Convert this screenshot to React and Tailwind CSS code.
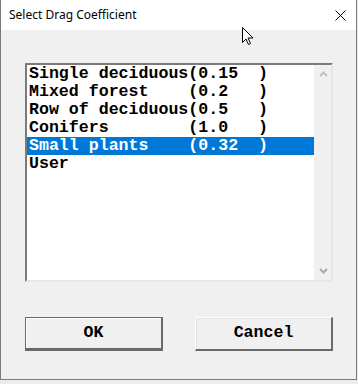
import React from "react";

const rows = [
  "Single deciduous(0.15  )",
  "Mixed forest    (0.2   )",
  "Row of deciduous(0.5   )",
  "Conifers        (1.0   )",
  "Small plants    (0.32  )",
  "User",
];

export default function App() {
  const mono = { fontFamily: '"Liberation Mono", "Courier New", monospace' };
  return (
    <div className="relative w-[358px] h-[384px] bg-[#ececec] overflow-hidden">
      <div className="w-[357px] h-[380px] flex flex-col border-l border-r border-b border-[#7a7a7a] bg-[#f0f0f0]">
        <div className="h-[30px] bg-white flex items-center justify-between pl-[8px] pr-[10px] shrink-0">
          <span
            className="text-[12px] text-black"
            style={{ fontFamily: '"Noto Sans", "Open Sans", sans-serif' }}
          >
            Select Drag Coefficient
          </span>
          <svg width="11" height="11" viewBox="0 0 11 11" className="mt-[1px]">
            <path d="M0.5 0.5 L10.5 10.5 M10.5 0.5 L0.5 10.5" stroke="#000" strokeWidth="1" />
          </svg>
        </div>
        <div className="flex flex-col pl-[24px] pt-[33px]">
          <div className="w-[308px] h-[219px] border-t-2 border-l-2 border-t-[#7a7a7a] border-l-[#7a7a7a] border-b-2 border-r-2 border-b-[#e6e6e6] border-r-[#e6e6e6] bg-white flex">
            <div className="flex-1 flex flex-col" style={mono}>
              {rows.map((r, i) => (
                <div
                  key={i}
                  className={
                    "h-[18px] leading-[18px] text-[16.6px] font-bold pl-[2px] whitespace-pre " +
                    (i === 4 ? "bg-[#0078d7] text-white" : "text-black")
                  }
                >
                  {r}
                </div>
              ))}
            </div>
            <div className="w-[17px] bg-[#f0f0f0] border-l border-[#f0f0f0] flex flex-col items-center justify-between pt-[6px] pb-[6px]">
              <svg width="9" height="6" viewBox="0 0 9 6">
                <path d="M1 5 L4.5 1.5 L8 5" stroke="#c2c2c2" strokeWidth="2" fill="none" />
              </svg>
              <svg width="9" height="6" viewBox="0 0 9 6">
                <path d="M1 1 L4.5 4.5 L8 1" stroke="#a8a8a8" strokeWidth="2" fill="none" />
              </svg>
            </div>
          </div>
          <div className="flex gap-[32px] mt-[35px]">
            <button
              className="w-[138px] h-[34px] bg-[#f0f0f0] border border-[#696969] border-b-[3px] border-r-[2px] shadow-[inset_1px_1px_0_#ffffff] flex items-center justify-center text-[16.6px] font-bold text-black"
              style={mono}
            >
              OK
            </button>
            <button
              className="w-[138px] h-[34px] bg-[#f0f0f0] border border-t-white border-l-white border-b-[2px] border-r-[2px] border-b-[#696969] border-r-[#696969] shadow-[inset_1px_1px_0_#e3e3e3] flex items-center justify-center text-[16.6px] font-bold text-black"
              style={mono}
            >
              Cancel
            </button>
          </div>
        </div>
      </div>
      <svg
        className="absolute left-[242px] top-[27px]"
        width="13"
        height="20"
        viewBox="0 0 13 20"
      >
        <path
          d="M0.5 0.5 L0.5 15.5 L4 12 L6.5 17.5 L8.5 16.5 L6 11 L11 11 Z"
          fill="#fff"
          stroke="#000"
          strokeWidth="1"
          strokeLinejoin="miter"
        />
      </svg>
    </div>
  );
}
